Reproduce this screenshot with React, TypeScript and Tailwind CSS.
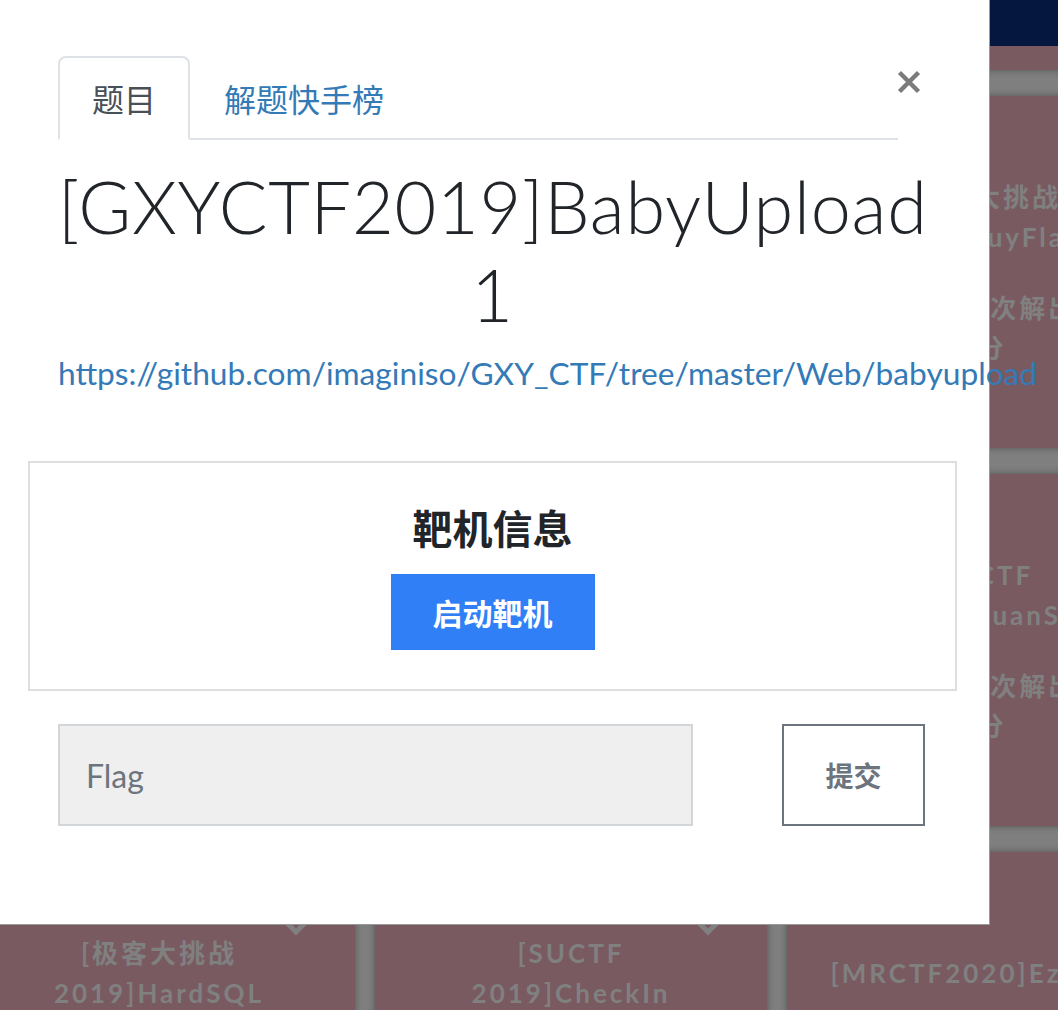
import React from "react";

type Card = { title: string[]; solves: string; score: string; chevron?: boolean };

const rows: Card[][] = [
  [
    { title: ["[HCTF 2018]WarmUp"], solves: "9876人次解出", score: "1分" },
    { title: ["[强网杯 2019]随便注"], solves: "6543人次解出", score: "1分" },
    { title: ["[SUCTF 2019]EasySQL"], solves: "5321人次解出", score: "1分" },
  ],
  [
    { title: ["[ACTF2020 新生赛]", "Include"], solves: "4789人次解出", score: "1分" },
    { title: ["[极客大挑战", "2019]Http"], solves: "4210人次解出", score: "1分" },
    { title: ["[极客大挑战", "2019]BuyFlag"], solves: "3857人次解出", score: "1分" },
  ],
  [
    { title: ["[GXYCTF2019]", "Ping Ping Ping"], solves: "3760人次解出", score: "1分" },
    { title: ["[护网杯", "2018]easy_tornado"], solves: "3598人次解出", score: "1分" },
    { title: ["[ZJCTF", "2019]NiZhuanSiWei"], solves: "3402人次解出", score: "1分" },
  ],
  [
    { title: ["[极客大挑战", "2019]HardSQL"], solves: "3108人次解出", score: "1分", chevron: true },
    { title: ["[SUCTF", "2019]CheckIn"], solves: "2976人次解出", score: "1分", chevron: true },
    { title: ["[MRCTF2020]Ezaudit"], solves: "2815人次解出", score: "1分" },
  ],
];

function ChallengeCard({ card }: { card: Card }) {
  return (
    <div className="relative h-[352px] bg-[#7a5a61] shadow-[0_0_7px_rgba(0,0,0,0.35)] text-[#808080] font-['Lato','Noto_Sans_CJK_SC',sans-serif] font-bold text-[26px] leading-[40px] tracking-[3px] text-center">
      {card.chevron && (
        <svg
          className="absolute right-[46px] top-[62px]"
          width="26"
          height="24"
          viewBox="0 0 26 24"
          fill="none"
          stroke="#808080"
          strokeWidth="5"
        >
          <path d="M3 8l10 10 10-10" />
        </svg>
      )}
      <div className="pt-[61px] h-[181px] flex flex-col items-center justify-center">
        {card.title.map((t) => (
          <div key={t} className="whitespace-nowrap">
            {t}
          </div>
        ))}
      </div>
      <div className="mt-[11px] whitespace-nowrap">{card.solves}</div>
      <div className="whitespace-nowrap">{card.score}</div>
    </div>
  );
}

export default function App() {
  return (
    <div className="relative w-[1058px] h-[1010px] overflow-hidden bg-[#7f7f7f]">
      {/* page behind the dialog */}
      <div className="h-[46px] bg-[#06173f]" />
      <div className="h-[964px] overflow-hidden">
        <div className="-mt-[328px] -ml-[37px] grid grid-cols-[392px_392px_392px] gap-x-[20px] gap-y-[26px]">
          {rows.flat().map((c, i) => (
            <ChallengeCard key={i} card={c} />
          ))}
        </div>
      </div>

      {/* dialog */}
      <div className="absolute left-0 top-0 w-[990px] h-[925px] bg-white border-r border-b border-black/40 font-['Lato','Noto_Sans_CJK_SC',sans-serif]">
        <div className="flex items-start pl-[58px] pt-[56px]">
          <ul className="w-[840px] flex border-b-2 border-[#dee2e6]">
            <li className="-mb-[2px] border-2 border-[#dee2e6] border-b-white rounded-t-[8px] px-[32px] py-[16px] text-[32px] leading-[48px] text-[#495057] font-['Noto_Sans_CJK_SC',sans-serif]">
              题目
            </li>
            <li className="-mb-[2px] border-2 border-transparent px-[32px] py-[16px] text-[32px] leading-[48px] text-[#337ab7] font-['Noto_Sans_CJK_SC',sans-serif]">
              解题快手榜
            </li>
          </ul>
          <svg
            className="mt-[14px] -ml-[1px]"
            width="24"
            height="24"
            viewBox="0 0 24 24"
            stroke="#7b7b7b"
            strokeWidth="4.5"
          >
            <path d="M2.5 2.5l19 19M21.5 2.5l-19 19" />
          </svg>
        </div>

        <div className="pl-[58px] pr-[62px]">
          <h2 className="mt-[22px] text-center text-[72px] leading-[88px] font-light text-[#212529] tracking-[0.75px]">
            [GXYCTF2019]BabyUpload 1
          </h2>
          <p className="mt-[11px] text-[31.7px] leading-[48px] text-[#337ab7] whitespace-nowrap">
            https://github.com/imaginiso/GXY_CTF/tree/master/Web/babyupload
          </p>

          <div className="mt-[64px] -mx-[30px] h-[230px] border-2 border-[#dedede] flex flex-col items-center pt-[40px]">
            <h5 className="text-[40px] leading-[48px] font-bold text-[#212529] font-['Noto_Sans_CJK_SC',sans-serif]">
              靶机信息
            </h5>
            <button className="mt-[23px] w-[204px] h-[76px] bg-[#307ff6] text-white text-[30px] font-bold font-['Noto_Sans_CJK_SC',sans-serif]">
              启动靶机
            </button>
          </div>

          <div className="mt-[33px] flex">
            <input
              className="w-[635px] h-[102px] bg-[#efefef] border-2 border-[#d3d6d9] px-[26px] text-[32px] text-[#495057] placeholder:text-[#6c757d] outline-none"
              placeholder="Flag"
            />
            <button className="ml-[89px] w-[143px] h-[102px] border-2 border-[#6c757d] text-[#6c757d] text-[28px] font-bold font-['Noto_Sans_CJK_SC',sans-serif]">
              提交
            </button>
          </div>
        </div>
      </div>
    </div>
  );
}
